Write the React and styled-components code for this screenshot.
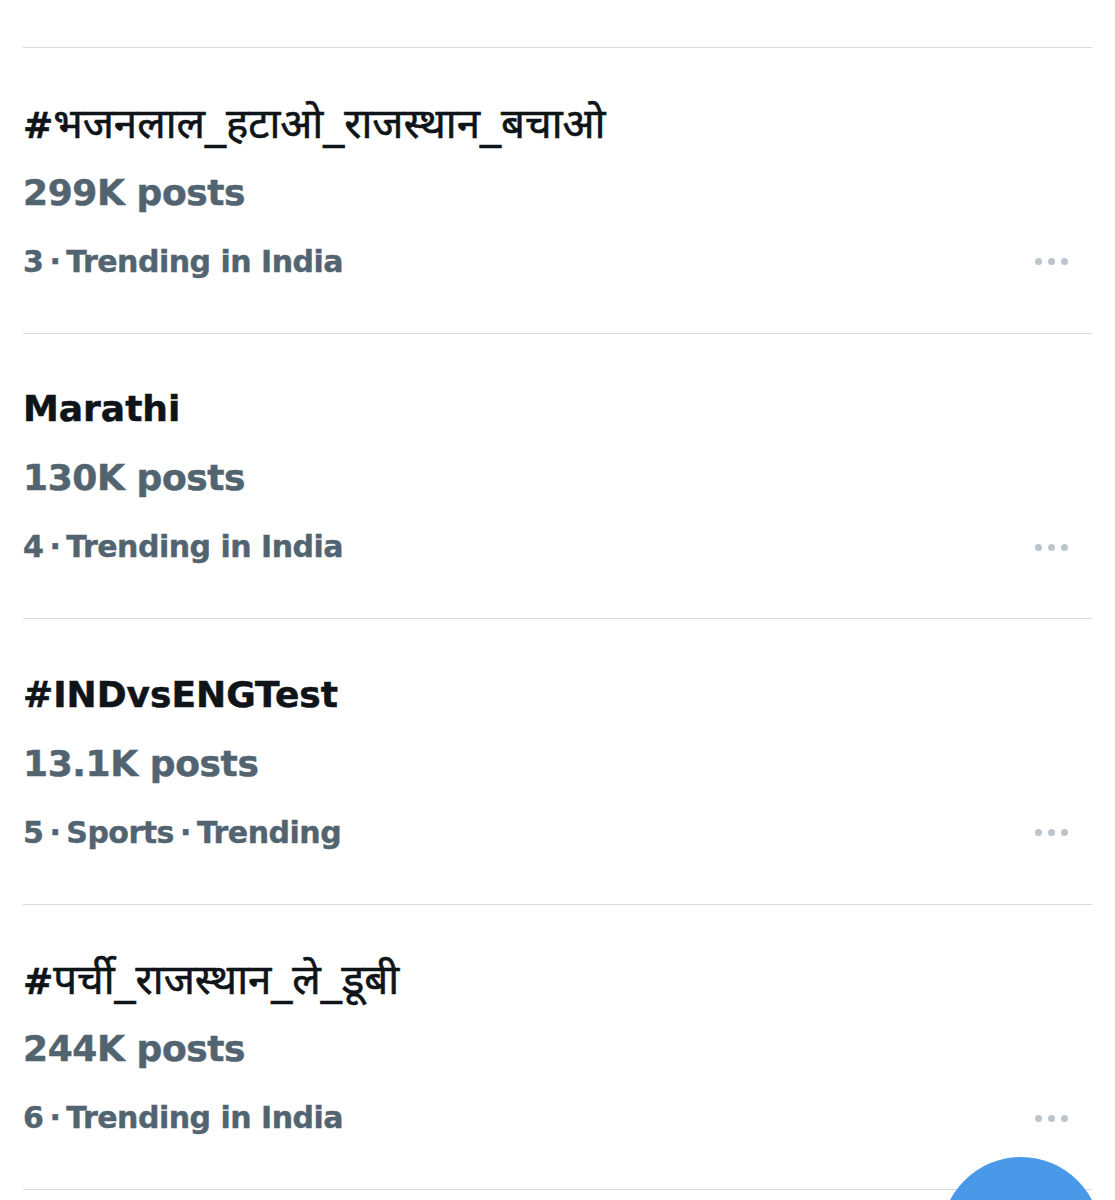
import React from "react";
import styled, { createGlobalStyle } from "styled-components";

const GlobalStyle = createGlobalStyle`
  html, body {
    margin: 0;
    padding: 0;
    background: #ffffff;
  }
  body {
    font-family: "DejaVu Sans", "Noto Sans", sans-serif;
    -webkit-font-smoothing: antialiased;
  }
`;

const Page = styled.div`
  position: relative;
  width: 1115px;
  height: 1200px;
  overflow: hidden;
  padding: 47px 23px 0;
  box-sizing: border-box;
`;

const List = styled.div`
  display: flex;
  flex-direction: column;
  border-bottom: 1px solid #d6dade;
`;

const Row = styled.div`
  display: flex;
  align-items: flex-end;
  justify-content: space-between;
  height: 285.5px;
  box-sizing: border-box;
  padding: 42px 0 37px;
  border-top: 1px solid #d6dade;
`;

const Info = styled.div`
  display: flex;
  flex-direction: column;
`;

const Title = styled.div`
  font-size: 36px;
  font-weight: 700;
  line-height: 68px;
  height: 68px;
  color: #0f1419;
  white-space: nowrap;
  -webkit-text-stroke: 0.5px #0f1419;
`;

const Hindi = styled.span`
  font-weight: 400;
  font-size: 42px;
  -webkit-text-stroke: 0.6px #0f1419;
`;

const Posts = styled.div`
  font-size: 36px;
  font-weight: 700;
  line-height: 70px;
  color: #536471;
  letter-spacing: -0.4px;
  -webkit-text-stroke: 0.5px #536471;
`;

const Meta = styled.div`
  font-size: 30px;
  font-weight: 700;
  line-height: 68px;
  color: #536471;
  letter-spacing: -0.5px;
  white-space: nowrap;
  -webkit-text-stroke: 0.4px #536471;
`;

const Sep = styled.span`
  padding: 0 6px;
`;

const More = styled.div`
  display: flex;
  align-items: center;
  gap: 6px;
  height: 68px;
  margin-right: 24px;
`;

const Dot = styled.span`
  width: 7px;
  height: 7px;
  border-radius: 50%;
  background: #bcc4cc;
`;

const Fab = styled.div`
  position: absolute;
  left: 941px;
  top: 1157px;
  width: 160px;
  height: 160px;
  border-radius: 50%;
  background: #4a99e9;
`;

const trends = [
  { tag: "#", hindi: "भजनलाल_हटाओ_राजस्थान_बचाओ", posts: "299K posts", meta: ["3", "Trending in India"] },
  { tag: "Marathi", posts: "130K posts", meta: ["4", "Trending in India"] },
  { tag: "#INDvsENGTest", posts: "13.1K posts", meta: ["5", "Sports", "Trending"] },
  { tag: "#", hindi: "पर्ची_राजस्थान_ले_डूबी", posts: "244K posts", meta: ["6", "Trending in India"] },
];

export default function App() {
  return (
    <>
      <GlobalStyle />
      <Page>
        <List>
          {trends.map((t) => (
            <Row key={t.meta[0]}>
              <Info>
                <Title>
                  {t.tag}
                  {t.hindi && <Hindi>{t.hindi}</Hindi>}
                </Title>
                <Posts>{t.posts}</Posts>
                <Meta>
                  {t.meta.map((m, i) => (
                    <React.Fragment key={m}>
                      {i > 0 && <Sep>·</Sep>}
                      {m}
                    </React.Fragment>
                  ))}
                </Meta>
              </Info>
              <More>
                <Dot />
                <Dot />
                <Dot />
              </More>
            </Row>
          ))}
        </List>
        <Fab />
      </Page>
    </>
  );
}
